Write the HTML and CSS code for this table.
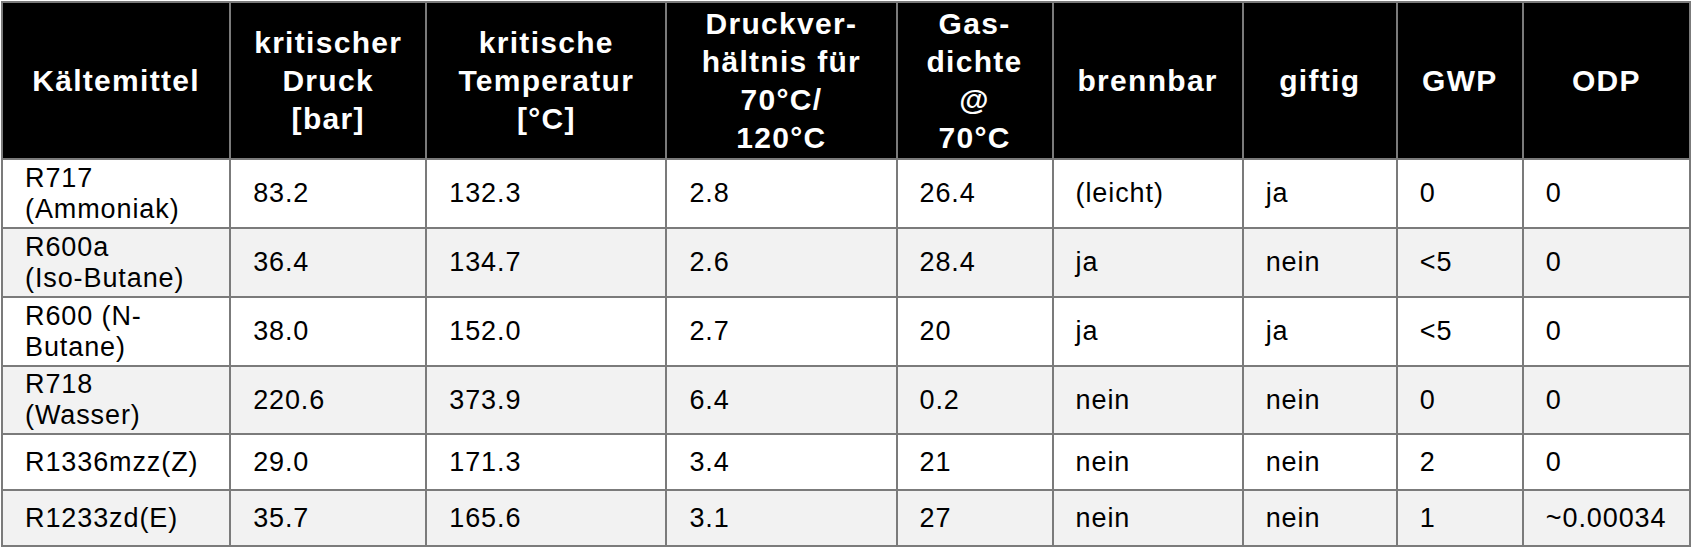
FILE: index.html
```html
<!DOCTYPE html>
<html lang="de">
<head>
<meta charset="utf-8">
<title>Kältemittel</title>
<link rel="stylesheet" href="styles.css">
</head>
<body>
<table class="ref-table">
  <colgroup>
    <col class="c1"><col class="c2"><col class="c3"><col class="c4"><col class="c5"><col class="c6"><col class="c7"><col class="c8"><col class="c9">
  </colgroup>
  <thead>
    <tr class="head-row">
      <th>Kältemittel</th>
      <th>kritischer<br>Druck<br>[bar]</th>
      <th>kritische<br>Temperatur<br>[°C]</th>
      <th>Druckver-<br>hältnis für<br>70°C/<br>120°C</th>
      <th>Gas-<br>dichte<br>@<br>70°C</th>
      <th>brennbar</th>
      <th>giftig</th>
      <th>GWP</th>
      <th>ODP</th>
    </tr>
  </thead>
  <tbody>
    <tr class="row-tall">
      <td>R717<br>(Ammoniak)</td><td>83.2</td><td>132.3</td><td>2.8</td><td>26.4</td><td>(leicht)</td><td>ja</td><td>0</td><td>0</td>
    </tr>
    <tr class="row-tall alt">
      <td>R600a<br>(Iso-Butane)</td><td>36.4</td><td>134.7</td><td>2.6</td><td>28.4</td><td>ja</td><td>nein</td><td>&lt;5</td><td>0</td>
    </tr>
    <tr class="row-tall">
      <td>R600 (N-<br>Butane)</td><td>38.0</td><td>152.0</td><td>2.7</td><td>20</td><td>ja</td><td>ja</td><td>&lt;5</td><td>0</td>
    </tr>
    <tr class="row-tall4 alt">
      <td>R718<br>(Wasser)</td><td>220.6</td><td>373.9</td><td>6.4</td><td>0.2</td><td>nein</td><td>nein</td><td>0</td><td>0</td>
    </tr>
    <tr class="row-short">
      <td>R1336mzz(Z)</td><td>29.0</td><td>171.3</td><td>3.4</td><td>21</td><td>nein</td><td>nein</td><td>2</td><td>0</td>
    </tr>
    <tr class="row-short alt">
      <td>R1233zd(E)</td><td>35.7</td><td>165.6</td><td>3.1</td><td>27</td><td>nein</td><td>nein</td><td>1</td><td>~0.00034</td>
    </tr>
  </tbody>
</table>
</body>
</html>
```
FILE: styles.css
```css
html, body {
  margin: 0;
  padding: 0;
  background: #ffffff;
}

.ref-table {
  border-collapse: collapse;
  table-layout: fixed;
  width: 1690px;
  margin: 1px 0 0 1px;
  font-family: "Liberation Sans", Arial, sans-serif;
  color: #000;
}

.c1 { width: 228px; }
.c2 { width: 196px; }
.c3 { width: 240px; }
.c4 { width: 230px; }
.c5 { width: 156px; }
.c6 { width: 190px; }
.c7 { width: 154px; }
.c8 { width: 126px; }
.c9 { width: 167px; }

.ref-table th,
.ref-table td {
  border: 2px solid #7b7b7b;
}

.head-row {
  height: 157px;
}

.head-row th {
  background: #000;
  color: #fff;
  font-weight: bold;
  font-size: 30px;
  letter-spacing: 1.3px;
  line-height: 38px;
  text-align: center;
  vertical-align: middle;
  padding: 0 2px;
}

.ref-table td {
  font-size: 27px;
  letter-spacing: 0.9px;
  line-height: 31px;
  text-align: left;
  vertical-align: middle;
  padding: 0 4px 0 22px;
  background: #fff;
  white-space: nowrap;
}

.ref-table tr.alt td {
  background: #f2f2f2;
}

.row-tall { height: 69px; }
.row-tall4 { height: 68px; }
.row-short { height: 56px; }
```
